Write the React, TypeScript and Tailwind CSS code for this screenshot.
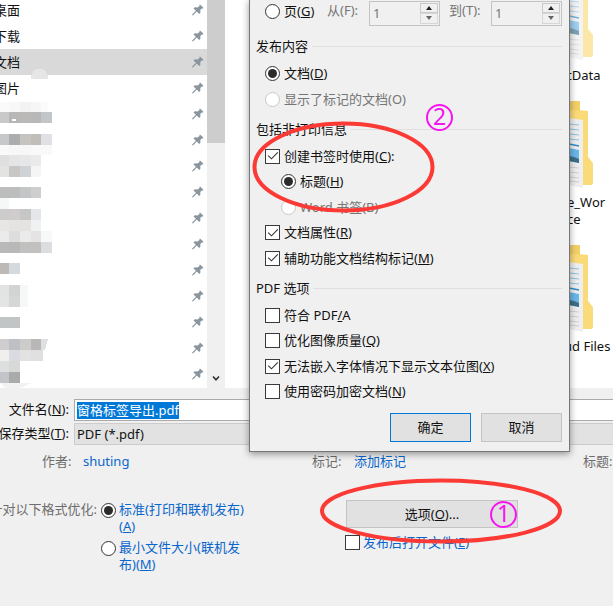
import type { ReactNode } from "react";

const FONT = "font-['Noto_Sans','Noto_Sans_CJK_SC',sans-serif]";

// colours of the blurred blocks, one entry per row of tiles
const blurRows: { y: number; h: number; tiles: [number, number, string][] }[] = [
    { y: 102, h: 10, tiles: [[0, 9, "#fafafa"], [9, 11, "#f8f8f8"], [20, 11, "#f3f3f3"], [31, 10, "#f6f6f6"], [41, 7, "#fbfbfb"]] },
    { y: 112, h: 11, tiles: [[0, 9, "#c9c9c9"], [9, 11, "#b9b7b5"], [20, 11, "#bbb9b8"], [31, 10, "#b8b8b8"], [41, 11, "#c3c6c8"]] },
    { y: 134, h: 11, tiles: [[0, 9, "#c6c8ca"], [9, 11, "#adadad"], [20, 11, "#c5c4c1"], [31, 10, "#c1bdb9"], [41, 11, "#dfe1e4"]] },
    { y: 145, h: 10, tiles: [[0, 9, "#f9f9f9"], [9, 22, "#f7f7f7"], [31, 21, "#f9f9f9"]] },
    { y: 155, h: 11, tiles: [[0, 9, "#dfdfdf"], [9, 11, "#e5e5e5"], [20, 11, "#e6e7e8"], [31, 10, "#e9eaeb"]] },
    { y: 166, h: 11, tiles: [[0, 9, "#e3e3e4"], [9, 11, "#c9c7c6"], [20, 11, "#d0d3d6"], [31, 10, "#f5f5f5"]] },
    { y: 187, h: 11, tiles: [[0, 9, "#bdbdbd"], [9, 11, "#bcbdbd"], [20, 11, "#c3c5c7"], [31, 10, "#cdcece"]] },
    { y: 198, h: 11, tiles: [[0, 9, "#f5f8f7"]] },
    { y: 209, h: 11, tiles: [[0, 9, "#cccccc"], [9, 11, "#d0cccb"], [20, 11, "#c5c6c5"], [31, 10, "#e5e6ea"]] },
    { y: 220, h: 11, tiles: [[0, 9, "#e8e6e5"], [9, 11, "#e5e3e1"], [20, 11, "#e4e3e2"], [31, 10, "#f0f1f3"]] },
    { y: 231, h: 11, tiles: [[0, 9, "#ebebeb"], [9, 11, "#dddddd"], [20, 11, "#ebebeb"], [31, 10, "#e6e3e4"], [41, 11, "#f6f8fa"]] },
    { y: 242, h: 11, tiles: [[0, 9, "#b9b9b9"], [9, 11, "#b8b8b8"], [20, 11, "#c1c1c0"], [31, 10, "#c2c1c0"], [41, 11, "#dcdde0"]] },
    { y: 263, h: 11, tiles: [[0, 9, "#bcb9b7"], [9, 11, "#d5dade"]] },
    { y: 285, h: 11, tiles: [[0, 9, "#e3e3e3"], [9, 11, "#d2d3d3"], [20, 8, "#f6f8f8"]] },
    { y: 296, h: 11, tiles: [[0, 9, "#e3e4e3"], [9, 11, "#d4d7d6"], [20, 8, "#f6f8f8"]] },
    { y: 317, h: 11, tiles: [[0, 9, "#c2c5c6"], [9, 11, "#c3c4c4"]] },
    { y: 339, h: 11, tiles: [[0, 9, "#cfcdcd"], [9, 11, "#bfc0c5"], [20, 11, "#cdcccb"], [31, 10, "#b9b8b6"]] },
    { y: 350, h: 11, tiles: [[0, 9, "#f0efed"], [9, 11, "#dadbe0"], [20, 11, "#e2e2e2"], [31, 12, "#e0e0e0"]] },
    { y: 361, h: 11, tiles: [[0, 9, "#dddfdf"], [9, 11, "#d8d8d8"]] },
    { y: 372, h: 11, tiles: [[0, 9, "#c1c5c9"], [9, 11, "#a8abaa"]] },
];

const places = ["桌面", "下载", "文档", "图片", "", "", "", "", "", "", "", "", "", "", ""];

const Pin = () => (
    <svg width="12" height="12" viewBox="0 0 12 12" fill="#8a969e">
        <path d="M7.6 .6 8.6 .9 11 3.3 11.4 4.5 9.8 4.400 8.300 6.1 8.4 8.7 7.2 9.9 4.8 7.6 1.2 11.3.2 11.4.4 10.3 3.900 6.700 1.500 4.400 2.800 3.200 5.4 3.5 7.500 2Z" />
    </svg>
);

const Radio = ({ checked, disabled }: { checked?: boolean; disabled?: boolean }) => (
    <span className={`flex size-[15px] shrink-0 items-center justify-center rounded-full border-[1.3px] bg-white ${disabled ? "border-[#c8c8c8]" : "border-[#333]"}`}>
        {checked && <span className="size-[9px] rounded-full bg-[#2b2b2b]" />}
    </span>
);

const Check = ({ checked }: { checked?: boolean }) => (
    <span className="flex size-[15px] shrink-0 items-center justify-center border-[1.3px] border-[#3a3a3a] bg-white">
        {checked && (
            <svg width="12" height="12" viewBox="0 0 12 12" fill="none" stroke="#333" strokeWidth="1.1">
                <path d="M1.2 5.6 4.5 8.8 10.8 2.3" />
            </svg>
        )}
    </span>
);

const Option = ({ control, label, hotkey, suffix = ")", className = "" }: { control: ReactNode; label: string; hotkey?: string; suffix?: string; className?: string }) => (
    <div className={`flex items-center gap-[4px] whitespace-nowrap ${className}`}>
        {control}
        <span>{label}{hotkey && <><u>{hotkey}</u>{suffix}</>}</span>
    </div>
);

const Group = ({ title }: { title: string }) => (
    <div className="flex h-5 items-center gap-[4px] pl-[6px] pr-[7px]">
        <span className="whitespace-nowrap">{title}</span>
        <span className="h-px flex-1 bg-[#dfdfdf]" />
    </div>
);

const Spinner = () => (
    <div className="flex h-[25px] w-[71px] border border-[#c3c3c3] bg-[#f0f0f0] p-px text-[#757575]">
        <span className="flex-1 pl-[2px] leading-[21px]">1</span>
        <div className="flex w-[18px] flex-col">
            <span className="flex flex-1 items-center justify-center border border-[#c9c9c9]">
                <svg width="6" height="4" viewBox="0 0 6 4"><path d="M0 4 3 0 6 4Z" fill="#222" /></svg>
            </span>
            <span className="flex flex-1 items-center justify-center border border-[#d6d6d6]">
                <svg width="6" height="4" viewBox="0 0 6 4"><path d="M0 0 3 4 6 0Z" fill="#666" /></svg>
            </span>
        </div>
    </div>
);

const Folder = ({ faded }: { faded?: boolean }) => (
    <svg width="24" height="90" viewBox="0 0 24 90" className={faded ? "opacity-65" : ""}>
        <path d="M0 0H11V9L19 10V56L24 62V82Q24 84 22 84H0Z" fill="#fadb7a" />
        <path d="M0 0H11V9H0Z" fill="#f3cf69" />
        <path d="M0 17 14 19V87L0 84Z" fill="#eeeeee" />
        <path d="M0 23 10 24M0 28 10 29M0 33 10 34M0 38 10 39" stroke="#8cc2e8" strokeWidth="1" />
        <path d="M0 43 10 45" stroke="#2e8bc9" strokeWidth="1.6" />
        <path d="M0 47 10 49V62L0 60Z" fill="#6bb6e8" />
        <path d="M0 55 5 56 10 58V62L0 60Z" fill="#3c6f86" />
        <path d="M0 66 10 67M0 71 10 72M0 76 10 77M0 80 10 81" stroke="#cfcfcf" strokeWidth="1" />
    </svg>
);

const Sidebar = () => (
    <div className="relative w-[207px] shrink-0 overflow-hidden">
        <div className="-mt-[3px]">
            {places.map((name, i) => (
                <div key={i} className={`flex h-[26px] items-center justify-between pr-[3px] ${i === 2 ? "bg-[#d9d9d9]" : ""}`}>
                    <span className="-ml-[6px]">{name}</span>
                    <Pin />
                </div>
            ))}
        </div>
        <svg className="absolute left-0 top-0" width="60" height="388" shapeRendering="crispEdges">
            {blurRows.map((row) => row.tiles.map(([x, w, fill]) => (
                <rect key={`${row.y}-${x}`} x={x} y={row.y} width={w} height={row.h} fill={fill} />
            )))}
            <path d="M31 79V76Q33 69 39.500 68.500Q46 69 48 76V79Z" fill="#e6e6e6" />
            <path d="M12 119H16V121H12Z" fill="#fff" />
            <path d="M41 339H48L45 350H41Z" fill="#dddfe1" />
            <path d="M0 383H32L20 388H5Z" fill="#f2f2f2" />
        </svg>
    </div>
);

const ExportOptions = () => (
    <div className="absolute -top-px left-[249px] h-[453px] w-[321px] border border-[#777] bg-[#f0f0f0] shadow-[0_2px_7px_rgba(0,0,0,0.4)]">
        <div className="flex h-[26px] items-center pl-[15px]">
            <Option className="-mt-[3px]" control={<Radio />} label="页(" hotkey="G" />
            <div className="flex flex-1 items-center justify-end pr-[7px]">
                <span className="-mt-[6px] w-[42px] whitespace-nowrap text-[#757575]">从(F):</span>
                <Spinner />
                <span className="-mt-[6px] ml-[9px] w-[42px] whitespace-nowrap text-[#757575]">到(T):</span>
                <Spinner />
            </div>
        </div>
        <div className="mt-[10px]"><Group title="发布内容" /></div>
        <div className="flex flex-col pl-[15px] pt-[4px]">
            <Option className="h-[26px]" control={<Radio checked />} label="文档(" hotkey="D" />
            <Option className="h-[26px] text-[#757575]" control={<Radio disabled />} label="显示了标记的文档(O)" />
        </div>
        <div className="mt-[7px]"><Group title="包括非打印信息" /></div>
        <div className="flex flex-col pl-[15px] pt-[4px]">
            <Option className="h-[26px]" control={<Check checked />} label="创建书签时使用(" hotkey="C" suffix="):" />
            <Option className="h-[25px] pl-4" control={<Radio checked />} label="标题(" hotkey="H" />
            <Option className="h-[26px] pl-4 text-[#757575]" control={<Radio disabled />} label="Word 书签(B)" />
            <Option className="h-[25px]" control={<Check checked />} label="文档属性(" hotkey="R" />
            <Option className="h-[26px]" control={<Check checked />} label="辅助功能文档结构标记(" hotkey="M" />
        </div>
        <div className="mt-[7px]"><Group title="PDF 选项" /></div>
        <div className="flex flex-col pl-[15px] pt-[4px]">
            <Option className="h-[26px]" control={<Check />} label="符合 PDF" hotkey="/" suffix="A" />
            <Option className="h-[25px]" control={<Check />} label="优化图像质量(" hotkey="Q" />
            <Option className="h-[26px]" control={<Check checked />} label="无法嵌入字体情况下显示文本位图(" hotkey="X" />
            <Option className="h-[25px]" control={<Check />} label="使用密码加密文档(" hotkey="N" />
        </div>
        <div className="mt-[9px] flex gap-[10px] pl-[140px]">
            <button className="h-[29px] w-[81px] border-[1.5px] border-[#0078d7] bg-[#e1e1e1]">确定</button>
            <button className="h-[29px] w-[81px] border border-[#c4c4c4] bg-[#e1e1e1]">取消</button>
        </div>
    </div>
);

export default function App() {
    return (
        <div className={`relative flex h-[606px] w-[613px] flex-col overflow-hidden bg-[#f0f0f0] text-[13px] leading-[17px] text-[#111] ${FONT}`}>
            <div className="flex h-[388px] bg-white">
                <Sidebar />
                <div className="flex w-[18px] shrink-0 flex-col justify-between bg-[#f0f0f0]">
                    <div className="h-[143px] bg-[#cdcdcd]" />
                    <svg className="mb-[6px] ml-[5px]" width="8" height="7" viewBox="0 0 8 7" fill="none" stroke="#333" strokeWidth="1.7">
                        <path d="M1 1.5 4 4.8 7 1.500" />
                    </svg>
                </div>
                <div className="ml-[344px] flex w-[44px] flex-col overflow-hidden whitespace-nowrap">
                    <div className="-mt-[27px] h-[94px]"><Folder faded /></div>
                    <div className="-ml-[2px] h-[34px]">tData</div>
                    <div className="h-[93px]"><Folder /></div>
                    <div className="-ml-[2px] h-[51px]">e_Wor<br />ce</div>
                    <div className="h-[93px]"><Folder /></div>
                    <div className="-ml-[5px]">ud Files</div>
                </div>
            </div>
            <div className="-mr-1 flex flex-col gap-[2px] pt-[11px]">
                <div className="flex h-[22px]">
                    <span className="w-[69px] whitespace-nowrap pt-[2px] text-right">文件名(<u>N</u>):</span>
                    <div className="ml-[5px] flex flex-1 items-center border border-[#aaa] bg-white pl-[2px]">
                        <span className="whitespace-nowrap bg-[#0078d7] text-white">窗格标签导出.pdf</span>
                    </div>
                </div>
                <div className="flex h-[22px]">
                    <span className="flex w-[69px] justify-end whitespace-nowrap pt-[2px]">保存类型(<u>T</u>):</span>
                    <div className="ml-[5px] flex flex-1 items-center border border-[#ccc] bg-[#e2e2e2] pl-[2px]">PDF (*.pdf)</div>
                </div>
            </div>
            <div className="mt-[6px] flex h-5 items-center whitespace-nowrap text-[#6d6d6d]">
                <span className="w-[83px] pl-[42px]">作者:</span>
                <span className="w-[229px] text-[#0a66cc]">shuting</span>
                <span className="w-[42px]">标记:</span>
                <span className="w-[229px] text-[#0a66cc]">添加标记</span>
                <span>标题:</span>
            </div>
            <div className="mt-[28px] flex">
                <span className="flex w-[97px] shrink-0 justify-end whitespace-nowrap pt-[2px] text-[#6d6d6d]">针对以下格式优化:</span>
                <div className="ml-[4px] flex w-[245px] flex-col gap-[3px] leading-[16.5px] text-[#0a66cc]">
                    <div className="flex gap-[3px]">
                        <span className="mt-[4px]"><Radio checked /></span>
                        <span className="whitespace-nowrap pt-[2px]">标准(打印和联机发布)<br />(<u>A</u>)</span>
                    </div>
                    <div className="flex gap-[3px]">
                        <span className="mt-[4px]"><Radio /></span>
                        <span className="whitespace-nowrap pt-[2px]">最小文件大小(联机发<br />布)(<u>M</u>)</span>
                    </div>
                </div>
                <div className="flex flex-col gap-[6px] pt-px">
                    <button className="h-[28px] w-[172px] border border-[#c4c4c4] bg-[#e1e1e1]">选项(<u>O</u>)...</button>
                    <div className="-ml-px flex gap-[3px] whitespace-nowrap text-[#0a66cc]">
                        <span className="mt-px"><Check /></span>
                        <span>发布后打开文件(<u>E</u>)</span>
                    </div>
                </div>
            </div>

            <ExportOptions />

            {/* hand drawn marks over the windows */}
            <svg className="absolute left-0 top-0" width="613" height="606" fill="none" stroke="#fb3a36" strokeWidth="4">
                <ellipse cx="343.500" cy="167" rx="89" ry="43.500" />
                <ellipse cx="441" cy="511" rx="119" ry="30.500" />
            </svg>
            <span className="absolute left-[426px] top-[104px] flex size-[27px] items-center justify-center rounded-full border-2 border-[#f814f0] pb-[3px] font-['Noto_Sans',sans-serif] text-[23px] leading-none text-[#f814f0]">2</span>
            <span className="absolute left-[490px] top-[501px] flex size-[27px] items-center justify-center rounded-full border-2 border-[#f814f0] pb-[3px] font-['Noto_Sans',sans-serif] text-[23px] leading-none text-[#f814f0]">1</span>
        </div>
    );
}
